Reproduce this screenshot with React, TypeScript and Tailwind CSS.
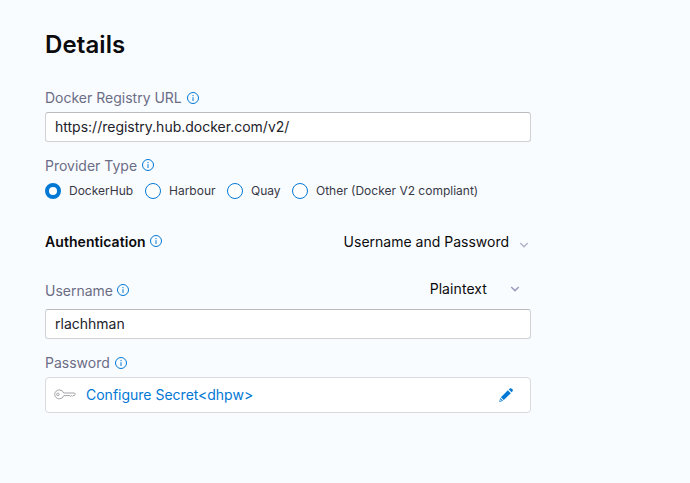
import type { ReactNode } from "react";

function InfoIcon({ className = "" }: { className?: string }) {
  return (
    <svg className={`size-3 shrink-0 ${className}`} viewBox="0 0 12 12" fill="none" stroke="#0278d5">
      <circle cx="6" cy="6" r="5.5" />
      <path d="M6 5.2V9M6 3v1.2" strokeWidth="1" />
    </svg>
  );
}

function Chevron({ color }: { color: string }) {
  return (
    <svg className="h-[6px] w-[10px] shrink-0" viewBox="0 0 10 6" fill="none" stroke={color} strokeWidth="1.5">
      <path d="M1.200 1L5 4.600 8.800 1" />
    </svg>
  );
}

function KeyIcon() {
  return (
    <svg className="h-[12px] w-[22px] shrink-0" viewBox="0 0 22 12" fill="none" stroke="#9a9a9f" strokeWidth=".9">
      <path d="M9.800 4H20.500l.8 1.100-1 1.500h-1.300l-.7.700-.8-.7-.9.700-.8-.7H9.800A4.800 4.500 0 0 1 5.400 9.900C2.800 9.900.7 7.900.7 5.400S2.800.9 5.400.9A4.800 4.500 0 0 1 9.800 4Z" />
      <circle cx="3.900" cy="5.400" r="1.300" />
    </svg>
  );
}

function PencilIcon() {
  return (
    <svg className="size-[14px] shrink-0" viewBox="0 0 14 14" fill="#0278d5">
      <path d="M8.900 2.300l2.900 2.900-7 6.900-2.900-2.900zM9.800 1.400l.7-.7c.6-.700 1.700-.7 2.400 0l.4.4c.700.7.700 1.700 0 2.400l-.7.700zM1.300 9.900l2.800 2.800-3.900 1.200z" />
      <path d="M1.500 11.300l1.300 1.300-1.700.5z" fill="#fff" />
    </svg>
  );
}

function Label({ children }: { children: ReactNode }) {
  return <span className="text-[14px] leading-5 text-[#6b6d85]">{children}</span>;
}

function Radio({ label, checked = false, className }: { label: string; checked?: boolean; className: string }) {
  return (
    <label className={`flex items-center gap-2 ${className}`}>
      <span className={`size-4 shrink-0 rounded-full bg-white ${checked ? "border-[4.500px] border-[#0278d5]" : "border border-[#0278d5]"}`} />
      <span className="whitespace-nowrap text-[12px] leading-4 text-[#383946]">{label}</span>
    </label>
  );
}

const inputStyle =
  "h-[30px] w-full rounded-[3px] border border-[#d0d1d4] border-t-[#b9bbbf] bg-white px-[9px] text-[14px] leading-7 text-[#22222a] flex items-center";

export default function App() {
  return (
    <main className="h-[483px] w-[690px] overflow-hidden bg-[#f9fcff] pl-[45px] pt-[29px] font-['Inter','Liberation_Sans',sans-serif]">
      <div className="flex w-[486px] flex-col">
        <h1 className="text-[24px] font-semibold leading-8 tracking-[0.1px] text-[#0b0b0d]">Details</h1>

        <div className="mt-[27px] flex h-5 items-center gap-[5px]">
          <Label>Docker Registry URL</Label>
          <InfoIcon />
        </div>
        <div className={`mt-1 ${inputStyle}`}>https://registry.hub.docker.com/v2/</div>

        <div className="mt-[14px] flex h-5 items-center gap-[5px]">
          <Label>Provider Type</Label>
          <InfoIcon className="-mt-[2px]" />
        </div>
        <div className="mt-[7px] flex h-4">
          <Radio label="DockerHub" checked className="w-[100px]" />
          <Radio label="Harbour" className="w-[82px]" />
          <Radio label="Quay" className="w-[65px]" />
          <Radio label="Other (Docker V2 compliant)" className="" />
        </div>

        <div className="mt-[33px] flex h-5 items-center text-[14px] leading-5 text-[#0b0b0d]">
          <span className="font-semibold tracking-[0.06px]">Authentication</span>
          <InfoIcon className="-mt-[2px] ml-[4px]" />
          <span className="ml-auto mr-[10px]">Username and Password</span>
          <span className="mr-[2px] mt-[5px] flex"><Chevron color="#b6b5cd" /></span>
        </div>

        <div className="mt-[27px] flex h-[22px] items-start">
          <div className="mt-[2px] flex items-center gap-[4px]">
            <Label>Username</Label>
            <InfoIcon className="-mt-[2px]" />
          </div>
          <div className="ml-auto mr-[11px] flex items-center gap-[23px] text-[14px] leading-5 text-[#0b0b0d]">
            <span className="tracking-[0.08px]">Plaintext</span>
            <Chevron color="#9d9bc0" />
          </div>
        </div>
        <div className={`mt-[8px] ${inputStyle}`}>rlachhman</div>

        <div className="mt-[14px] flex h-5 items-center gap-[5px]">
          <Label>Password</Label>
          <InfoIcon />
        </div>
        <div className="mt-1 flex h-9 items-center rounded-[4px] border border-[#d9dade] bg-white pl-[8px] pr-[17px]">
          <KeyIcon />
          <span className="ml-[10px] text-[14px] leading-5 text-[#0278d5]">Configure Secret&lt;dhpw&gt;</span>
          <span className="ml-auto flex"><PencilIcon /></span>
        </div>
      </div>
    </main>
  );
}
